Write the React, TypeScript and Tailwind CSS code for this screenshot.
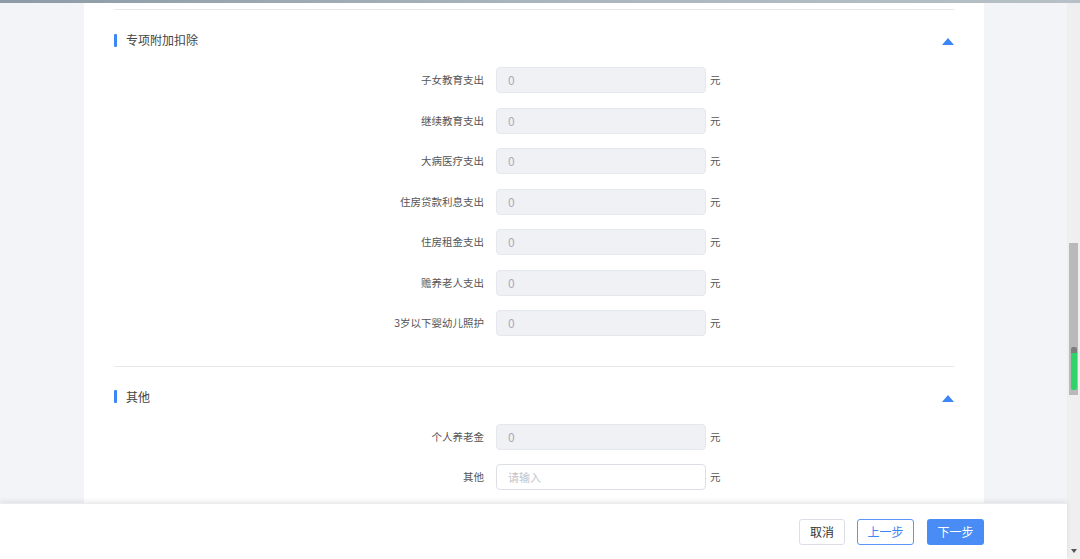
const specialRows = [
  '子女教育支出',
  '继续教育支出',
  '大病医疗支出',
  '住房贷款利息支出',
  '住房租金支出',
  '赡养老人支出',
  '3岁以下婴幼儿照护',
];

function SectionHeader({ title }: { title: string }) {
  return (
    <div className="flex items-center h-[24px]">
      <span className="w-[3px] h-[13px] bg-[#3d86f5] rounded-[1px]" />
      <span className="ml-[9px] text-[12px] text-[#444]">{title}</span>
      <span className="ml-auto mt-[3px] w-0 h-0 border-l-[6px] border-r-[6px] border-b-[7px] border-l-transparent border-r-transparent border-b-[#3d86f5]" />
    </div>
  );
}

function FieldRow({ label, editable }: { label: string; editable?: boolean }) {
  return (
    <div className="flex items-center h-[40.5px]">
      <span className="w-[370px] text-right text-[10.5px] text-[#555]">{label}</span>
      {editable ? (
        <div className="ml-[12px] w-[210px] h-[26px] rounded-[4px] border border-[#dcdfe6] bg-white flex items-center pl-[11px] text-[11px] text-[#c0c4cc]">
          请输入
        </div>
      ) : (
        <div className="ml-[12px] w-[210px] h-[26px] rounded-[4px] border border-[#e4e7ed] bg-[#f0f1f4] flex items-center pl-[11px] text-[12px] text-[#aab]">
          0
        </div>
      )}
      <span className="ml-[4px] text-[10.5px] text-[#555]">元</span>
    </div>
  );
}

export default function App() {
  return (
    <div
      className="w-full h-[559px] overflow-hidden flex flex-col bg-[#f3f4f8]"
      style={{ fontFamily: '"Noto Sans CJK SC", "Noto Sans", sans-serif' }}
    >
      <div className="h-[3px] bg-gradient-to-r from-[#8d9ba6] via-[#aab6be] to-[#b6c0c6]" />
      <div className="flex-1 flex min-h-0">
        <div className="flex-1 flex flex-col min-w-0">
          <div className="flex-1 min-h-0 overflow-hidden">
            <div className="ml-[84px] w-[900px] bg-white px-[30px] pt-[6px] h-full">
              <div className="h-px bg-[#e8e8e8]" />
              <div className="mt-[18px]">
                <SectionHeader title="专项附加扣除" />
              </div>
              <div className="mt-[7.75px]">
                {specialRows.map((r) => (
                  <FieldRow key={r} label={r} />
                ))}
              </div>
              <div className="mt-[22.5px] h-px bg-[#e8e8e8]" />
              <div className="mt-[18px]">
                <SectionHeader title="其他" />
              </div>
              <div className="mt-[7.75px]">
                <FieldRow label="个人养老金" />
                <FieldRow label="其他" editable />
              </div>
            </div>
          </div>
          <div className="h-[56px] bg-white shadow-[0_-2px_5px_rgba(0,0,0,0.08)] border-t border-[#ececec] flex items-center justify-end pr-[83px] gap-[12px] text-[12px] relative">
            <button className="h-[26px] w-[46px] rounded-[3px] border border-[#dcdfe6] bg-white text-[#333]">
              取消
            </button>
            <button className="h-[26px] w-[57px] rounded-[3px] border border-[#5b95f5] bg-white text-[#3d86f5]">
              上一步
            </button>
            <button className="h-[26px] w-[57px] rounded-[3px] bg-[#4a8cf6] text-white ml-[1px]">
              下一步
            </button>
          </div>
        </div>
        <div className="w-[13px] bg-[#efefef] flex flex-col items-center">
          <div className="mt-[240px] w-[9px] h-[152px] bg-[#b9b9b9] flex flex-col justify-end pb-[5px] items-center">
            <div className="w-[6px] h-[43px] rounded-[2px] overflow-hidden flex flex-col">
              <div className="h-[6px] bg-[#7d7d7d]" />
              <div className="flex-1 bg-[#2fd36a]" />
            </div>
          </div>
          <div className="mt-auto mb-[6px] w-0 h-0 border-l-[3px] border-r-[3px] border-t-[4px] border-l-transparent border-r-transparent border-t-[#555]" />
        </div>
      </div>
    </div>
  );
}
